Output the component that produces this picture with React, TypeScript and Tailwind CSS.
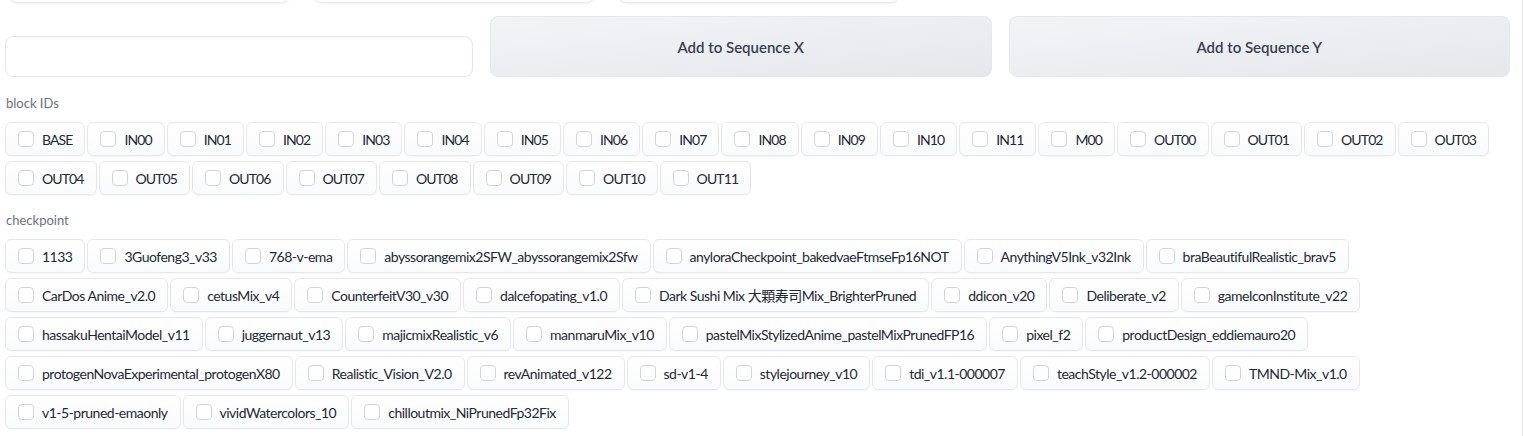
const blockIds = [
  "BASE", "IN00", "IN01", "IN02", "IN03", "IN04", "IN05", "IN06", "IN07", "IN08", "IN09", "IN10", "IN11",
  "M00", "OUT00", "OUT01", "OUT02", "OUT03", "OUT04", "OUT05", "OUT06", "OUT07", "OUT08", "OUT09", "OUT10", "OUT11",
];

const checkpoints = [
  "1133",
  "3Guofeng3_v33",
  "768-v-ema",
  "abyssorangemix2SFW_abyssorangemix2Sfw",
  "anyloraCheckpoint_bakedvaeFtmseFp16NOT",
  "AnythingV5Ink_v32Ink",
  "braBeautifulRealistic_brav5",
  "CarDos Anime_v2.0",
  "cetusMix_v4",
  "CounterfeitV30_v30",
  "dalcefopating_v1.0",
  "Dark Sushi Mix 大顆寿司Mix_BrighterPruned",
  "ddicon_v20",
  "Deliberate_v2",
  "gameIconInstitute_v22",
  "hassakuHentaiModel_v11",
  "juggernaut_v13",
  "majicmixRealistic_v6",
  "manmaruMix_v10",
  "pastelMixStylizedAnime_pastelMixPrunedFP16",
  "pixel_f2",
  "productDesign_eddiemauro20",
  "protogenNovaExperimental_protogenX80",
  "Realistic_Vision_V2.0",
  "revAnimated_v122",
  "sd-v1-4",
  "stylejourney_v10",
  "tdi_v1.1-000007",
  "teachStyle_v1.2-000002",
  "TMND-Mix_v1.0",
  "v1-5-pruned-emaonly",
  "vividWatercolors_10",
  "chilloutmix_NiPrunedFp32Fix",
];

function Chip({ label, tight }: { label: string; tight?: boolean }) {
  return (
    <label
      className={`flex h-[34px] items-center gap-2 rounded-md border border-[#e5e7eb] bg-gradient-to-t from-[#f9fafb] to-white px-3 text-[14px] text-[#1f2937] shadow-[0_1px_1px_rgba(0,0,0,0.03)] ${
        tight ? "tracking-[-0.9px]" : "tracking-[-0.5px]"
      }`}
    >
      <span className="h-4 w-4 shrink-0 rounded-[4px] border border-[#d1d5db] bg-white" />
      <span className="whitespace-nowrap">{label}</span>
    </label>
  );
}

function ChipGroup({
  title,
  items,
  top,
  tight,
}: {
  title: string;
  items: string[];
  top: string;
  tight?: boolean;
}) {
  return (
    <div className={top}>
      <div className="mb-[11px] pl-[1px] text-[13px] leading-4 text-[#6b7280]">{title}</div>
      <div className="flex w-[1485px] flex-wrap gap-x-[2px] gap-y-[5px]">
        {items.map((it) => (
          <Chip key={it} label={it} tight={tight} />
        ))}
      </div>
    </div>
  );
}

export default function App() {
  return (
    <div
      className="h-[436px] w-[1523px] overflow-hidden border-r border-[#e5e7eb] bg-white"
      style={{ fontFamily: 'Lato, "Noto Sans CJK JP", sans-serif' }}
    >
      {/* cut-off boxes at the very top */}
      <div className="flex gap-[25px] pl-[9px]">
        <div className="-mt-10 h-[42px] w-[280px] rounded-lg bg-white shadow-[0_1px_3px_rgba(0,0,0,0.12)]" />
        <div className="-mt-10 h-[42px] w-[280px] rounded-lg bg-white shadow-[0_1px_3px_rgba(0,0,0,0.12)]" />
        <div className="-mt-10 h-[42px] w-[280px] rounded-lg bg-white shadow-[0_1px_3px_rgba(0,0,0,0.12)]" />
      </div>

      <div className="px-[5px]">
        <div className="mt-[14px] grid w-[1505px] grid-cols-[468px_1fr_1fr] items-end gap-[17px]">
          <div className="h-[41px] rounded-lg border border-[#e5e7eb] bg-white shadow-[inset_0_1px_2px_rgba(0,0,0,0.03)]" />
          <button className="h-[61px] rounded-lg border border-[#e5e7eb] bg-gradient-to-br from-[#f3f4f6] to-[#e5e7eb] pt-[2px] text-[15px] font-semibold text-[#374151]">
            Add to Sequence X
          </button>
          <button className="h-[61px] rounded-lg border border-[#e5e7eb] bg-gradient-to-br from-[#f3f4f6] to-[#e5e7eb] pt-[2px] text-[15px] font-semibold text-[#374151]">
            Add to Sequence Y
          </button>
        </div>

        <ChipGroup title="block IDs" items={blockIds} top="mt-[18px]" tight />
        <ChipGroup title="checkpoint" items={checkpoints} top="mt-[17px]" />
      </div>
    </div>
  );
}
